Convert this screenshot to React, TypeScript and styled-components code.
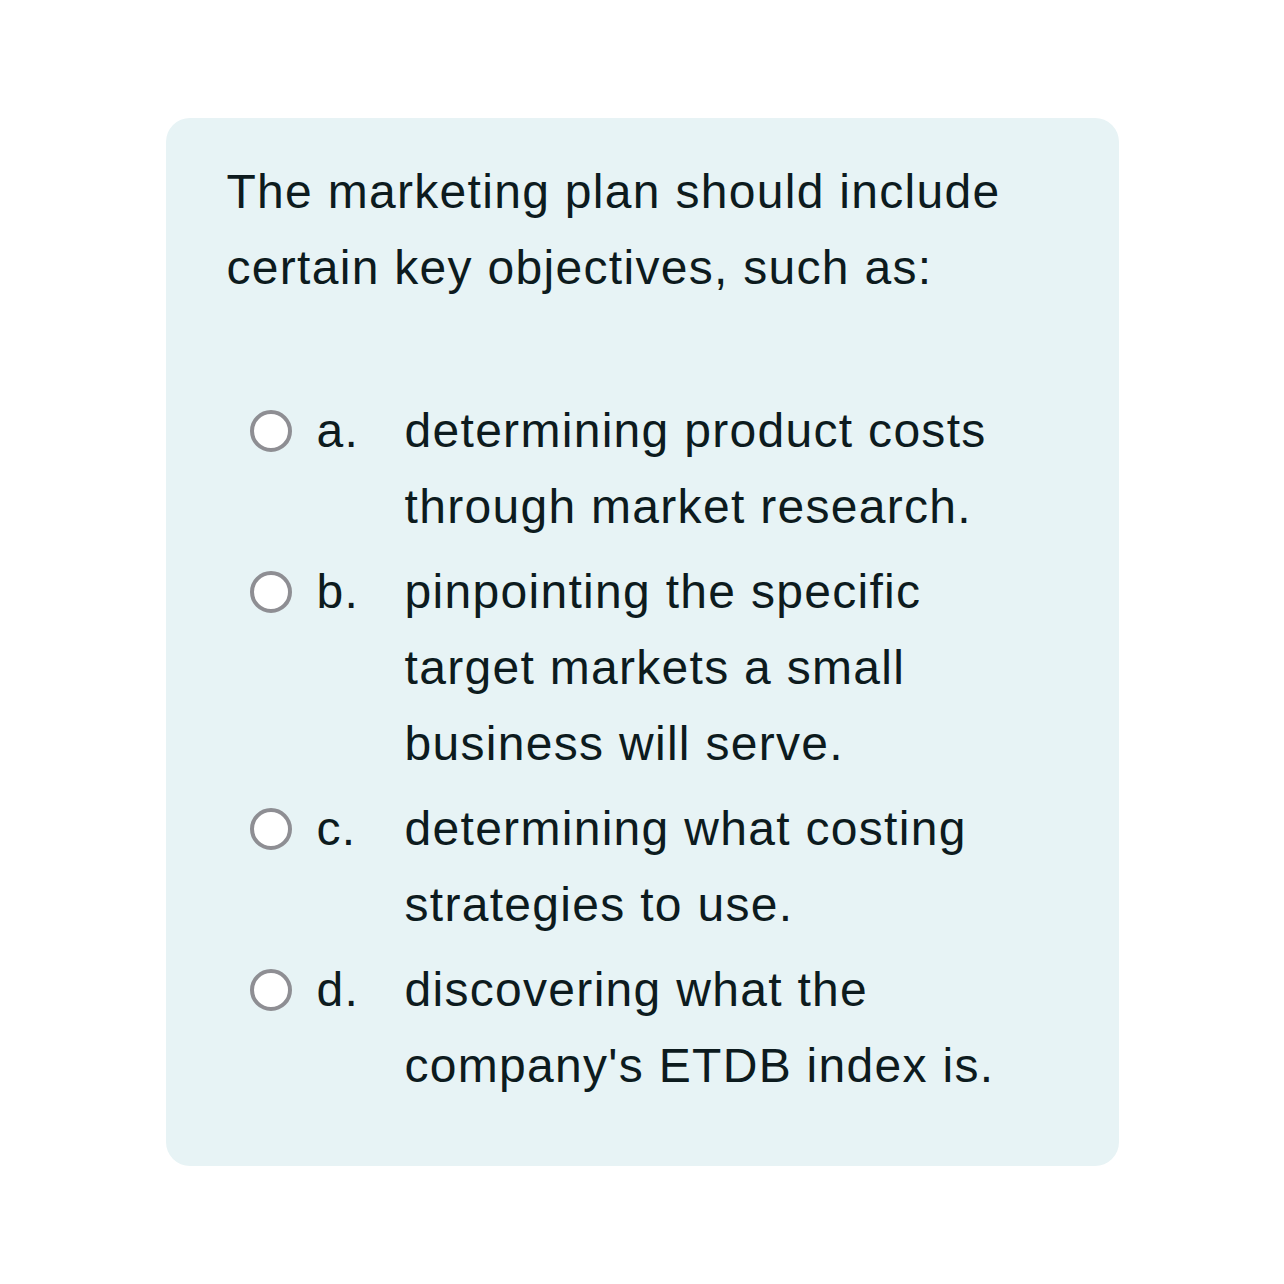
import React from 'react';
import styled, { createGlobalStyle } from 'styled-components';

const GlobalStyle = createGlobalStyle`
  html, body {
    margin: 0;
    padding: 0;
    background: #ffffff;
  }
`;

interface Choice {
  letter: string;
  text: string;
}

const choices: Choice[] = [
  { letter: 'a.', text: 'determining product costs through market research.' },
  {
    letter: 'b.',
    text: 'pinpointing the specific target markets a small business will serve.',
  },
  { letter: 'c.', text: 'determining what costing strategies to use.' },
  { letter: 'd.', text: "discovering what the company's ETDB index is." },
];

const App: React.FC = () => {
  return (
    <>
      <GlobalStyle />
      <Page>
        <Card>
          <Question>
            The marketing plan should include certain key objectives, such as:
          </Question>
          <Options>
            {choices.map((c) => (
              <Option key={c.letter}>
                <RadioCell>
                  <Radio />
                </RadioCell>
                <Letter>{c.letter}</Letter>
                <OptionText>{c.text}</OptionText>
              </Option>
            ))}
          </Options>
        </Card>
      </Page>
    </>
  );
};

const Page = styled.div`
  min-height: 100vh;
  display: flex;
  justify-content: center;
  align-items: center;
  font-family: 'Liberation Sans', Arial, sans-serif;
  color: #0d1b1e;
  letter-spacing: 1.3px;
`;
const Card = styled.div`
  width: 953px;
  box-sizing: border-box;
  padding: 36px 61px 62px;
  background-color: #e7f3f5;
  border-radius: 24px;
`;
const Question = styled.p`
  margin: 0;
  font-size: 48px;
  line-height: 76px;
`;
const Options = styled.div`
  margin-top: 87px;
  display: flex;
  flex-direction: column;
  gap: 9px;
`;
const Option = styled.div`
  display: grid;
  grid-template-columns: 67px 88px 1fr;
  padding-left: 23px;
  font-size: 48px;
  line-height: 76px;
`;
const RadioCell = styled.div`
  height: 76px;
  display: flex;
  align-items: center;
`;
const Radio = styled.span`
  width: 42px;
  height: 42px;
  box-sizing: border-box;
  border-radius: 50%;
  border: 4px solid #8e8e93;
  background: #ffffff;
`;
const Letter = styled.span``;
const OptionText = styled.span``;

export default App;
